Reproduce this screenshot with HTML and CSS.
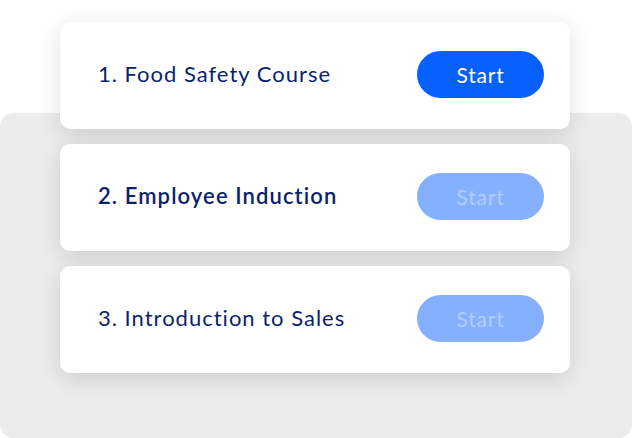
FILE: index.html
```html
<!DOCTYPE html>
<html lang="en">
<head>
    <meta charset="UTF-8">
    <meta name="viewport" content="width=device-width, initial-scale=1.0">
    <title>Courses</title>
    <link rel="stylesheet" href="styles.css">
</head>
<body>
    <div class="panel">
        <div class="course-list">
            <div class="course">
                <span class="course-title">1. Food Safety Course</span>
                <button class="start-btn">Start</button>
            </div>
            <div class="course">
                <span class="course-title current">2. Employee Induction</span>
                <button class="start-btn locked">Start</button>
            </div>
            <div class="course">
                <span class="course-title">3. Introduction to Sales</span>
                <button class="start-btn locked">Start</button>
            </div>
        </div>
    </div>
</body>
</html>
```

FILE: styles.css
```css
body {
    font-family: Lato, "Open Sans", sans-serif;
    margin: 0;
    padding: 0;
    background-color: #fff;
    width: 632px;
    height: 438px;
    overflow: hidden;
}
.panel {
    margin-top: 113px;
    height: 325px;
    background-color: #ececec;
    border-radius: 14px;
}
.course-list {
    position: relative;
    top: -91px;
    display: flex;
    flex-direction: column;
    gap: 15px;
    padding: 0 62px 0 60px;
}
.course {
    height: 107px;
    box-sizing: border-box;
    padding: 0 26px 2px 38px;
    display: flex;
    align-items: center;
    justify-content: space-between;
    background: #fff;
    border-radius: 10px;
    box-shadow: 0 6px 22px rgba(0, 0, 0, 0.13);
}
.course-title {
    font-size: 22px;
    color: #0b1f6e;
    letter-spacing: 1px;
    margin-top: -2px;
}
.course-title.current {
    font-weight: 600;
    letter-spacing: 1.1px;
}
.start-btn {
    width: 127px;
    height: 47px;
    border: none;
    border-radius: 24px;
    background-color: #0560fd;
    color: #fff;
    font-family: inherit;
    font-size: 21px;
    letter-spacing: 0.8px;
    cursor: pointer;
}
.start-btn.locked {
    background-color: #85b0fd;
    color: #b3cdfd;
}
```
